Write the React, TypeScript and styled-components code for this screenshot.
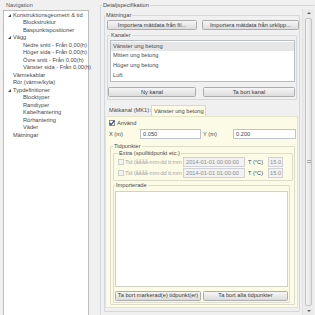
import React from "react";
import styled, { createGlobalStyle } from "styled-components";

const GlobalStyle = createGlobalStyle`
  html, body { margin: 0; padding: 0; }
  body {
    width: 315px;
    height: 315px;
    overflow: hidden;
    background: #f0f0f0;
    font-family: "Liberation Sans", Arial, sans-serif;
    font-size: 5.7px;
    color: #484848;
  }
  * { box-sizing: border-box; }
`;

interface NavItem {
  label: string;
  level: number;
  open?: boolean;
}

const navItems: NavItem[] = [
  { label: "Konstruktionsgeometri & tid", level: 0, open: true },
  { label: "Blockstruktur", level: 1 },
  { label: "Baspunktspositioner", level: 1 },
  { label: "Vägg", level: 0, open: true },
  { label: "Nedre snitt - Från 0,00(h)", level: 1 },
  { label: "Höger sida - Från 0,00(h)", level: 1 },
  { label: "Övre snitt - Från 0,00(h)", level: 1 },
  { label: "Vänster sida - Från 0,00(h)", level: 1 },
  { label: "Värmekablar", level: 0 },
  { label: "Rör (värme/kyla)", level: 0 },
  { label: "Typdefinitioner", level: 0, open: true },
  { label: "Blocktyper", level: 1 },
  { label: "Randtyper", level: 1 },
  { label: "Kabelhantering", level: 1 },
  { label: "Rörhantering", level: 1 },
  { label: "Väder", level: 1 },
  { label: "Mätningar", level: 0 },
];

const channels = ["Vänster ung betong", "Mitten ung betong", "Höger ung betong", "Luft"];

const extraTimes = ["2014-01-01 00:00:00", "2014-01-01 01:00:00"];

export default function App() {
  return (
    <>
      <GlobalStyle />
      <Root>
        <NavColumn>
          <NavTitle>Navigation</NavTitle>
          <Tree>
            {navItems.map((item) => (
              <TreeRow key={item.label} $level={item.level}>
                <Expander>{item.open && <Triangle />}</Expander>
                {item.label}
              </TreeRow>
            ))}
          </Tree>
        </NavColumn>

        <DetailColumn>
          <DetailGroup>
            <Legend>Detaljspecifikation</Legend>
            <ScrollContent>
              <Group>
                <Legend>Mätningar</Legend>
                <ImportRow>
                  <Button $w={90}>Importera mätdata från fil...</Button>
                  <Button>Importera mätdata från urklipp...</Button>
                </ImportRow>

                <ChannelGroup>
                  <Legend>Kanaler</Legend>
                  <ChannelList>
                    {channels.map((c, i) => (
                      <ListItem key={c} $selected={i === 0}>
                        {c}
                      </ListItem>
                    ))}
                  </ChannelList>
                  <ChannelButtons>
                    <Button $w={88}>Ny kanal</Button>
                    <Button>Ta bort kanal</Button>
                  </ChannelButtons>
                </ChannelGroup>

                <MkRow>
                  <MkLabel>Mätkanal (MK1):</MkLabel>
                  <MkTab>Vänster ung betong</MkTab>
                </MkRow>

                <MkPanel>
                  <CheckRow>
                    <Checkbox checked />
                    Använd
                  </CheckRow>
                  <CoordRow>
                    <FieldLabel $w={31}>X (m)</FieldLabel>
                    <Input $w={61}>0.050</Input>
                    <FieldLabel $w={30} $gap={2}>
                      Y (m)
                    </FieldLabel>
                    <Input $w={63}>0.200</Input>
                  </CoordRow>

                  <TimeGroup>
                    <Legend>Tidpunkter</Legend>
                    <ExtraGroup>
                      <Legend>Extra (spulltidpunkt etc.)</Legend>
                      {extraTimes.map((t) => (
                        <TimeRow key={t}>
                          <Checkbox disabled />
                          <FieldLabel $w={58} $muted $tight>
                            Tid (åååå-mm-dd tt:mm
                          </FieldLabel>
                          <Input $w={62} $disabled>
                            {t}
                          </Input>
                          <FieldLabel $w={20} $gap={3}>
                            T (°C)
                          </FieldLabel>
                          <Input $w={15} $disabled $pad={1}>
                            15.0
                          </Input>
                        </TimeRow>
                      ))}
                    </ExtraGroup>
                    <ImportedGroup>
                      <Legend>Importerade</Legend>
                      <ImportedList />
                      <ImportedButtons>
                        <Button $w={86} $h={9.5}>
                          Ta bort markerad(e) tidpunkt(er)
                        </Button>
                        <Button $h={9.5}>Ta bort alla tidpunkter</Button>
                      </ImportedButtons>
                    </ImportedGroup>
                  </TimeGroup>
                </MkPanel>
              </Group>
            </ScrollContent>

            <Scrollbar>
              <ArrowBox>
                <Arrow $dir="up" />
              </ArrowBox>
              <Thumb>
                <Grip />
              </Thumb>
              <ArrowBox>
                <Arrow $dir="down" />
              </ArrowBox>
            </Scrollbar>
          </DetailGroup>
        </DetailColumn>
      </Root>
    </>
  );
}

function Checkbox({ checked, disabled }: { checked?: boolean; disabled?: boolean }) {
  return (
    <CheckBoxBox $disabled={disabled}>
      {checked && (
        <svg width="6" height="6" viewBox="0 0 6 6" style={{ overflow: "visible" }}>
          <path d="M0.6 3 L2.2 4.7 L5.4 0.6" fill="none" stroke="#27488f" strokeWidth="1.2" />
        </svg>
      )}
    </CheckBoxBox>
  );
}

const Root = styled.div`
  display: flex;
  gap: 11px;
  height: 315px;
`;

const NavColumn = styled.div`
  width: 89px;
  flex-shrink: 0;
  padding-left: 3px;
  display: flex;
  flex-direction: column;
`;

const NavTitle = styled.div`
  height: 10px;
  line-height: 10px;
  padding-left: 3px;
  color: #5a5a5a;
`;

const Tree = styled.div`
  flex: 1;
  background: #fff;
  border: 1px solid #bcbcbc;
  border-bottom: none;
  padding-top: 0.5px;
`;

const TreeRow = styled.div<{ $level: number }>`
  height: 7.5px;
  line-height: 7.5px;
  display: flex;
  align-items: center;
  padding-left: ${(p) => 4 + p.$level * 10}px;
  white-space: nowrap;
`;

const Expander = styled.span`
  width: 5px;
  height: 7.5px;
  flex-shrink: 0;
  display: flex;
  align-items: center;
`;

const Triangle = styled.span`
  width: 0;
  height: 0;
  border-left: 3px solid transparent;
  border-bottom: 3px solid #4a4a4a;
`;

const DetailColumn = styled.div`
  flex: 1;
  min-width: 0;
  height: 315px;
  padding-top: 1.5px;
`;

const Group = styled.fieldset`
  margin: 0;
  padding: 0 0 3px 0;
  min-width: 0;
  border: 1px solid #d2d8dc;
  border-radius: 1px;
`;

const Legend = styled.legend`
  padding: 0 1px;
  margin: 0;
  line-height: 7px;
  color: #4a4a4a;
  white-space: nowrap;
`;

const DetailGroup = styled(Group)`
  height: 313.5px;
  padding: 0 0 0 1px;
  border-right: none;
  border-bottom: none;
  display: flex;
`;

const ScrollContent = styled.div`
  flex: 1;
  min-width: 0;
  padding: 3px 2px 0 2px;
`;

const ImportRow = styled.div`
  display: flex;
  gap: 5px;
  padding: 1.5px 0 0 2px;
`;

const Button = styled.div<{ $w?: number; $h?: number }>`
  ${(p) => (p.$w ? `width: ${p.$w}px; flex-shrink: 0;` : "flex: 1;")}
  height: ${(p) => p.$h ?? 10}px;
  line-height: ${(p) => (p.$h ?? 10) - 2}px;
  border: 1px solid #acacac;
  border-radius: 1.5px;
  background: linear-gradient(#f5f5f5, #e9e9e9 50%, #dcdcdc);
  text-align: center;
  white-space: nowrap;
  overflow: hidden;
  color: #3a3a3a;
`;

const ChannelGroup = styled(Group)`
  margin: 1.5px 2px 0 2px;
  padding: 0 1px 2px 2px;
`;

const ChannelList = styled.div`
  margin-top: 1.5px;
  height: 42px;
  background: #fff;
  border: 1px solid #b9bdc4;
  padding-top: 0.5px;
`;

const ListItem = styled.div<{ $selected?: boolean }>`
  height: 9.7px;
  line-height: 9.7px;
  padding-left: 2px;
  background: ${(p) => (p.$selected ? "#e6e6e6" : "transparent")};
`;

const ChannelButtons = styled.div`
  display: flex;
  gap: 7px;
  margin: 5px 0 0 -2px;
`;

const MkRow = styled.div`
  display: flex;
  align-items: flex-end;
  margin-top: 4px;
  height: 12px;
  padding-left: 4px;
`;

const MkLabel = styled.div`
  width: 42px;
  line-height: 10px;
  padding-bottom: 1px;
`;

const MkTab = styled.div`
  width: 55px;
  height: 11px;
  line-height: 10px;
  padding-left: 2px;
  border: 1px solid #d9d9c2;
  border-bottom: none;
  background: #fbfbe6;
  white-space: nowrap;
`;

const MkPanel = styled.div`
  margin-right: 1px;
  background: #fbfbe6;
  border: 1px solid #e4e4c6;
  padding: 2px 2px 2px 3px;
`;

const CheckRow = styled.div`
  height: 7px;
  display: flex;
  align-items: center;
  gap: 2px;
`;

const CheckBoxBox = styled.span<{ $disabled?: boolean }>`
  width: 6px;
  height: 6px;
  flex-shrink: 0;
  display: flex;
  align-items: center;
  justify-content: center;
  border: 1px solid ${(p) => (p.$disabled ? "#cfcfcf" : "#8f8f8f")};
  background: ${(p) => (p.$disabled ? "#f3f3f3" : "#fff")};
  margin-right: ${(p) => (p.$disabled ? 1 : 0)}px;
`;

const CoordRow = styled.div`
  display: flex;
  align-items: center;
  margin-top: 3px;
  height: 10px;
`;

const FieldLabel = styled.span<{ $w: number; $gap?: number; $muted?: boolean; $tight?: boolean }>`
  width: ${(p) => p.$w}px;
  margin-left: ${(p) => p.$gap ?? 0}px;
  flex-shrink: 0;
  white-space: nowrap;
  overflow: hidden;
  letter-spacing: ${(p) => (p.$tight ? "-0.12px" : "normal")};
  color: ${(p) => (p.$muted ? "#a8a8a8" : "#484848")};
`;

const Input = styled.div<{ $w: number; $disabled?: boolean; $pad?: number }>`
  width: ${(p) => p.$w}px;
  height: 10px;
  line-height: 8px;
  flex-shrink: 0;
  padding-left: ${(p) => p.$pad ?? 2}px;
  border: 1px solid ${(p) => (p.$disabled ? "#cfd1d4" : "#bfc3ca")};
  background: ${(p) => (p.$disabled ? "#f2f2f2" : "#fff")};
  color: ${(p) => (p.$disabled ? "#8c8c8c" : "#484848")};
  white-space: nowrap;
  overflow: hidden;
`;

const TimeGroup = styled(Group)`
  margin: 3.5px 0 0 1px;
  padding: 0 1px 1px 2px;
  border-color: #dcdccb;
`;

const ExtraGroup = styled(Group)`
  padding: 0.5px 0 2px 4px;
  border-color: #dcdccb;
`;

const TimeRow = styled.div`
  display: flex;
  align-items: center;
  height: 10px;
  & + & {
    margin-top: 1px;
  }
`;

const ImportedGroup = styled(Group)`
  margin: 1px 3px 0 0;
  padding: 0 1px 1.5px 1px;
  border-color: #dcdccb;
`;

const ImportedList = styled.div`
  margin-top: 2px;
  height: 96px;
  background: #fff;
  border: 1px solid #d0d2c8;
`;

const ImportedButtons = styled.div`
  display: flex;
  gap: 2px;
  margin-top: 4px;
`;

const Scrollbar = styled.div`
  width: 12px;
  margin-right: 1px;
  flex-shrink: 0;
  display: flex;
  flex-direction: column;
  background: #ebebeb;
  border-left: 1px solid #e2e2e2;
`;

const ArrowBox = styled.div`
  height: 8px;
  display: flex;
  align-items: center;
  justify-content: center;
`;

const Arrow = styled.span<{ $dir: "up" | "down" }>`
  width: 0;
  height: 0;
  border-left: 2px solid transparent;
  border-right: 2px solid transparent;
  ${(p) => (p.$dir === "up" ? "border-bottom" : "border-top")}: 2px solid #606060;
`;

const Thumb = styled.div`
  flex: 1;
  margin: 1px 2px;
  border: 1px solid #c3c3c3;
  border-radius: 2px;
  background: linear-gradient(to right, #f4f4f4, #e3e3e3);
  display: flex;
  align-items: center;
  justify-content: center;
`;

const Grip = styled.span`
  width: 4px;
  height: 3px;
  border-top: 1px solid #a8a8a8;
  border-bottom: 1px solid #a8a8a8;
`;
